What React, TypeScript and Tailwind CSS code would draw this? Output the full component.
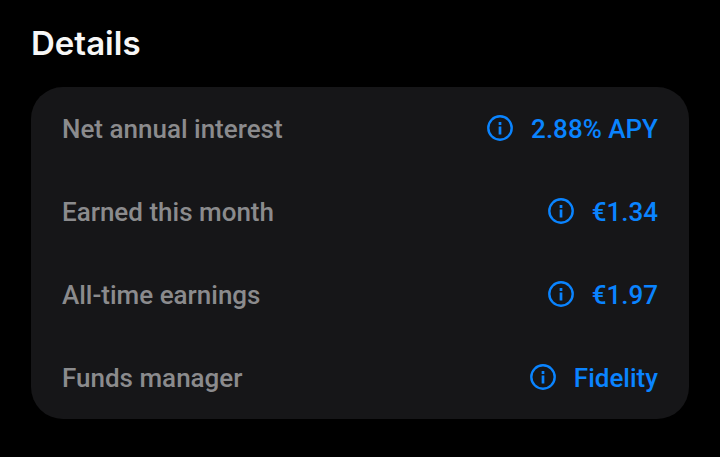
import React from "react";

const details = [
    { label: "Net annual interest", value: "2.88% APY" },
    { label: "Earned this month", value: "€1.34" },
    { label: "All-time earnings", value: "€1.97" },
    { label: "Funds manager", value: "Fidelity" },
];

const InfoIcon = () => (
    <svg viewBox="0 0 26 26" className="mb-0.5 size-[26px]" fill="none" aria-hidden="true">
        <circle cx="13" cy="13" r="11.7" stroke="currentColor" strokeWidth="2.4" />
        <path d="M13 7v3M13 11.4v8" stroke="currentColor" strokeWidth="2.7" />
    </svg>
);

export default function App() {
    return (
        <main className="min-h-screen bg-black px-[31px] pt-6 pb-[38px] font-['Roboto',sans-serif]">
            <h1 className="font-['Inter',sans-serif] text-[33px] leading-[39px] font-semibold text-[#f7f7f7]">
                Details
            </h1>
            <dl className="mt-6 rounded-[32px] bg-[#161618]">
                {details.map(({ label, value }) => (
                    <div key={label} className="flex h-[83px] items-center justify-between px-[31px]">
                        <dt className="text-[26px] leading-8 font-medium text-[#8b8b8d]">{label}</dt>
                        <dd>
                            <button
                                type="button"
                                className="flex items-center gap-[18px] text-[26px] leading-8 font-medium text-[#0a84ff]"
                            >
                                <InfoIcon />
                                {value}
                            </button>
                        </dd>
                    </div>
                ))}
            </dl>
        </main>
    );
}
